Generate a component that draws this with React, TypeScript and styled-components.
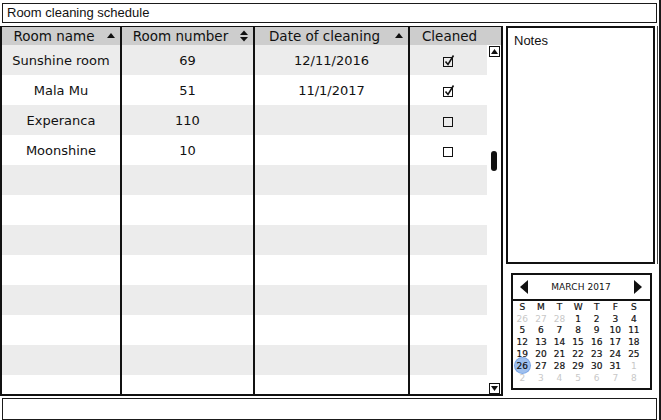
import React from "react";
import styled, { createGlobalStyle } from "styled-components";

const Global = createGlobalStyle`
  html, body { margin: 0; padding: 0; background: #fff; }
  body { width: 661px; height: 420px; overflow: hidden; }
`;

const Window = styled.div`
  position: relative;
  width: 661px;
  height: 420px;
  box-sizing: border-box;
  border-right: 2px solid #1a1a1a;
  padding-top: 3px;
  display: flex;
  flex-direction: column;
  font-family: "DejaVu Sans", sans-serif;
  color: #111;
`;

const TextInput = styled.div<{ $h: number }>`
  margin-left: 2px;
  margin-right: 2px;
  height: ${(p) => p.$h}px;
  box-sizing: border-box;
  border: 1.5px solid #1a1a1a;
  background: #fff;
  font-family: "Liberation Sans", Arial, sans-serif;
  font-size: 13px;
  line-height: 18px;
  padding-left: 4px;
`;

const Main = styled.div`
  display: flex;
  margin-top: 3px;
  height: 370px;
`;

const Table = styled.div`
  width: 503px;
  box-sizing: border-box;
  border: 2px solid #111;
  border-top-width: 1.5px;
  display: flex;
  flex-direction: column;
  overflow: hidden;
`;

const HeaderRow = styled.div`
  display: flex;
  height: 18px;
  background: #cdcdcd;
  flex-shrink: 0;
`;

const widths = [118, 131, 153, 77];

const HeadCell = styled.div<{ $w: number; $last?: boolean }>`
  width: ${(p) => p.$w}px;
  flex-shrink: 0;
  border-right: ${(p) => (p.$last ? "none" : "2px solid #111")};
  display: flex;
  align-items: center;
  font-size: 13.5px;
  line-height: 18px;
`;

const HeadLabel = styled.span`
  flex: 1;
  text-align: center;
  white-space: nowrap;
`;

const SortIcon = styled.svg`
  width: 10px;
  height: 12px;
  margin-right: 4px;
  flex-shrink: 0;
`;

const HeadFill = styled.div`
  flex: 1;
`;

const Body = styled.div`
  flex: 1;
  display: flex;
  min-height: 0;
`;

const Rows = styled.div`
  flex: 1;
  display: flex;
  flex-direction: column;
  overflow: hidden;
`;

const Row = styled.div<{ $alt: boolean }>`
  display: flex;
  height: 30px;
  flex-shrink: 0;
  background: ${(p) => (p.$alt ? "#ececec" : "#fff")};
`;

const Cell = styled.div<{ $w: number }>`
  width: ${(p) => p.$w}px;
  flex-shrink: 0;
  border-right: 2px solid #111;
  display: flex;
  align-items: center;
  justify-content: center;
  font-size: 13px;
  white-space: nowrap;
`;

const Scrollbar = styled.div`
  width: 14px;
  flex-shrink: 0;
  background: #fff;
  display: flex;
  flex-direction: column;
  align-items: center;
`;

const ScrollBtn = styled.div`
  width: 11px;
  height: 11px;
  box-sizing: border-box;
  border: 1.5px solid #111;
  display: flex;
  align-items: center;
  justify-content: center;
  margin-top: 1px;
`;

const Thumb = styled.div`
  width: 6px;
  height: 20px;
  background: #111;
  border-radius: 3px;
  margin-top: 94px;
`;

const Track = styled.div`
  flex: 1;
`;

const Side = styled.div`
  flex: 1;
  display: flex;
  flex-direction: column;
  padding-left: 3px;
  padding-right: 4px;
`;

const Notes = styled.div`
  height: 238px;
  box-sizing: border-box;
  border: 2px solid #111;
  box-shadow: 2px 0 0 0 #fff, 3px 0 0 0 #444;
  font-family: "Liberation Sans", Arial, sans-serif;
  font-size: 13px;
  padding: 5px 0 0 6px;
`;

const Calendar = styled.div`
  margin: 9px 3px 0 5px;
  height: 117px;
  box-sizing: border-box;
  border: 2.5px solid #111;
  display: flex;
  flex-direction: column;
`;

const CalHead = styled.div`
  height: 26px;
  box-sizing: border-box;
  border-bottom: 2px solid #111;
  display: flex;
  align-items: center;
  justify-content: space-between;
  padding: 0 8px 0 7px;
`;

const CalTitle = styled.span`
  font-size: 9px;
  letter-spacing: 0.1px;
`;

const CalGrid = styled.div`
  display: grid;
  grid-template-columns: repeat(7, 18.6px);
  grid-auto-rows: 11.8px;
`;

const Day = styled.div<{ $muted?: boolean }>`
  display: flex;
  align-items: center;
  justify-content: center;
  font-size: 9px;
  color: ${(p) => (p.$muted ? "#c8c8c8" : "#111")};
  -webkit-text-stroke: ${(p) => (p.$muted ? "0" : "0.2px #111")};
`;

const Selected = styled.span`
  display: flex;
  align-items: center;
  justify-content: center;
  width: 15px;
  height: 15px;
  border-radius: 50%;
  background: #9fc0ee;
  box-shadow: 0 0 0 1px #7aa6e6;
`;

const Bottom = styled.div`
  margin-top: 2px;
`;

const Up = () => (
  <SortIcon viewBox="0 0 10 12">
    <polygon points="1,8 9,8 5,3" fill="#111" />
  </SortIcon>
);
const UpDown = () => (
  <SortIcon viewBox="0 0 10 12">
    <polygon points="1,5 9,5 5,0.5" fill="#111" />
    <polygon points="1,7 9,7 5,11.5" fill="#111" />
  </SortIcon>
);

const Check = ({ checked }: { checked: boolean }) => (
  <svg width="13" height="13" viewBox="0 0 13 13">
    <rect x="1.5" y="3.5" width="9" height="9" fill="none" stroke="#111" strokeWidth="1" />
    {checked && (
      <polyline points="3.5,7.5 6,10.5 11.5,1.5" fill="none" stroke="#111" strokeWidth="1.6" />
    )}
  </svg>
);

const data: [string, string, string, boolean][] = [
  ["Sunshine room", "69", "12/11/2016", true],
  ["Mala Mu", "51", "11/1/2017", true],
  ["Experanca", "110", "", false],
  ["Moonshine", "10", "", false],
];

const calRows: number[][] = [
  [26, 27, 28, 1, 2, 3, 4],
  [5, 6, 7, 8, 9, 10, 11],
  [12, 13, 14, 15, 16, 17, 18],
  [19, 20, 21, 22, 23, 24, 25],
  [26, 27, 28, 29, 30, 31, 1],
  [2, 3, 4, 5, 6, 7, 8],
];

export default function App() {
  const rows = [];
  for (let i = 0; i < 12; i++) {
    const d = data[i];
    rows.push(
      <Row key={i} $alt={i % 2 === 0}>
        <Cell $w={widths[0]}>{d ? d[0] : ""}</Cell>
        <Cell $w={widths[1]}>{d ? d[1] : ""}</Cell>
        <Cell $w={widths[2]}>{d ? d[2] : ""}</Cell>
        <Cell $w={widths[3]}>{d ? <Check checked={d[3]} /> : ""}</Cell>
      </Row>
    );
  }
  return (
    <>
      <Global />
      <Window>
        <TextInput $h={21}>Room cleaning schedule</TextInput>
        <Main>
          <Table>
            <HeaderRow>
              <HeadCell $w={widths[0]}>
                <HeadLabel>Room name</HeadLabel>
                <Up />
              </HeadCell>
              <HeadCell $w={widths[1]}>
                <HeadLabel>Room number</HeadLabel>
                <UpDown />
              </HeadCell>
              <HeadCell $w={widths[2]}>
                <HeadLabel>Date of cleaning</HeadLabel>
                <Up />
              </HeadCell>
              <HeadCell $w={widths[3] + 2} $last>
                <HeadLabel>Cleaned</HeadLabel>
              </HeadCell>
              <HeadFill />
            </HeaderRow>
            <Body>
              <Rows>{rows}</Rows>
              <Scrollbar>
                <ScrollBtn>
                  <svg width="7" height="5" viewBox="0 0 7 5">
                    <polygon points="0,5 7,5 3.5,0" fill="#111" />
                  </svg>
                </ScrollBtn>
                <Thumb />
                <Track />
                <ScrollBtn>
                  <svg width="7" height="5" viewBox="0 0 7 5">
                    <polygon points="0,0 7,0 3.5,5" fill="#111" />
                  </svg>
                </ScrollBtn>
              </Scrollbar>
            </Body>
          </Table>
          <Side>
            <Notes>Notes</Notes>
            <Calendar>
              <CalHead>
                <svg width="8" height="14" viewBox="0 0 8 14">
                  <polygon points="8,0 8,14 0,7" fill="#111" />
                </svg>
                <CalTitle>MARCH 2017</CalTitle>
                <svg width="8" height="14" viewBox="0 0 8 14">
                  <polygon points="0,0 0,14 8,7" fill="#111" />
                </svg>
              </CalHead>
              <CalGrid>
                {["S", "M", "T", "W", "T", "F", "S"].map((d, i) => (
                  <Day key={"h" + i}>{d}</Day>
                ))}
                {calRows.map((r, ri) =>
                  r.map((n, ci) => {
                    const muted = (ri === 0 && ci < 3) || ri === 5 || (ri === 4 && ci === 6);
                    if (ri === 4 && ci === 0)
                      return (
                        <Day key={ri + "-" + ci}>
                          <Selected>{n}</Selected>
                        </Day>
                      );
                    return (
                      <Day key={ri + "-" + ci} $muted={muted}>
                        {n}
                      </Day>
                    );
                  })
                )}
              </CalGrid>
            </Calendar>
          </Side>
        </Main>
        <Bottom>
          <TextInput $h={22}></TextInput>
        </Bottom>
      </Window>
    </>
  );
}
